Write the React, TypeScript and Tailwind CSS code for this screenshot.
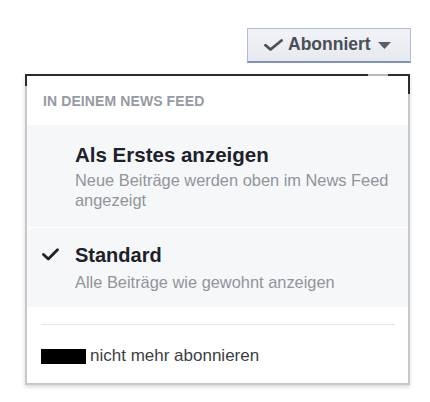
import React from "react";

export default function App() {
  return (
    <div className="w-[430px] h-[402px] bg-white overflow-hidden font-['Liberation_Sans',Arial,sans-serif]">
      <div className="pt-[28px] pl-[247px]">
        <div className="w-[164px] h-[35px] flex items-center pl-[16px] pr-[19px] bg-gradient-to-b from-[#f1f3f7] to-[#e6e9ef] border border-[#b3bdd2] border-b-[#8393b4] border-b-2">
          <svg width="19" height="12" viewBox="0 0 19 12" className="shrink-0">
            <path d="M1.5 6.2 L6.5 10.5 L17.5 1.5" fill="none" stroke="#4b4f56" strokeWidth="2.8" strokeLinecap="round" strokeLinejoin="round" />
          </svg>
          <span className="ml-[5px] text-[17.5px] leading-none font-bold text-[#4b4f56]">Abonniert</span>
          <svg width="13" height="7" viewBox="0 0 13 7" className="ml-auto shrink-0">
            <path d="M0 0 H13 L6.5 7 Z" fill="#5a5f68" />
          </svg>
        </div>
      </div>

      <div className="relative ml-[25px] mt-[11px] w-[385px] h-[311px] border-x-2 border-b-2 border-x-[#c6c8cc] border-b-[#c6c8cc] border-t-2 border-t-[#2b2d26] shadow-[0_2px_4px_rgba(0,0,0,0.15)] bg-white">
        <div className="absolute -left-[2px] -top-[2px] w-[2px] h-[12px] bg-[#2b2d26]" />
        <div className="absolute -right-[2px] -top-[2px] w-[2px] h-[20px] bg-[#2b2d26]" />
        <div className="absolute left-[341px] -top-[2px] w-[20px] h-[2px] bg-[#b8bab8]" />

        <div className="h-[49px] pt-[17px] pl-[16px] text-[14px] leading-[16px] font-bold text-[#969aa2] tracking-[0.1px]">
          IN DEINEM NEWS FEED
        </div>

        <div className="h-[102px] bg-[#f6f7f9] pt-[18px] pl-[48px] pr-[10px]">
          <div className="text-[20.5px] leading-[24px] font-bold text-[#1d2129]">Als Erstes anzeigen</div>
          <div className="mt-[3px] text-[16.4px] leading-[20px] text-[#90949c]">
            Neue Beiträge werden oben im News Feed angezeigt
          </div>
        </div>

        <div className="h-[80px] bg-[#f6f7f9] border-t border-white pt-[15px] pl-[15px] flex">
          <div className="w-[33px] pt-[5px] shrink-0">
            <svg width="17" height="13" viewBox="0 0 17 13">
              <path d="M1.5 6.5 L6.3 11 L15.5 1.8" fill="none" stroke="#1d2129" strokeWidth="2.8" strokeLinecap="round" strokeLinejoin="round" />
            </svg>
          </div>
          <div>
            <div className="text-[20px] leading-[24px] font-bold text-[#1d2129]">Standard</div>
            <div className="mt-[5px] text-[16.4px] leading-[20px] text-[#90949c]">
              Alle Beiträge wie gewohnt anzeigen
            </div>
          </div>
        </div>

        <div className="pt-[17px] px-[14px] pr-[13px]">
          <div className="h-px bg-[#e5e6e9]" />
          <div className="mt-[21px] flex items-center h-[20px]">
            <div className="w-[45px] h-[15px] bg-black" />
            <span className="ml-[4px] text-[17px] leading-[20px] text-[#3b3e44]">nicht mehr abonnieren</span>
          </div>
        </div>
      </div>
    </div>
  );
}
